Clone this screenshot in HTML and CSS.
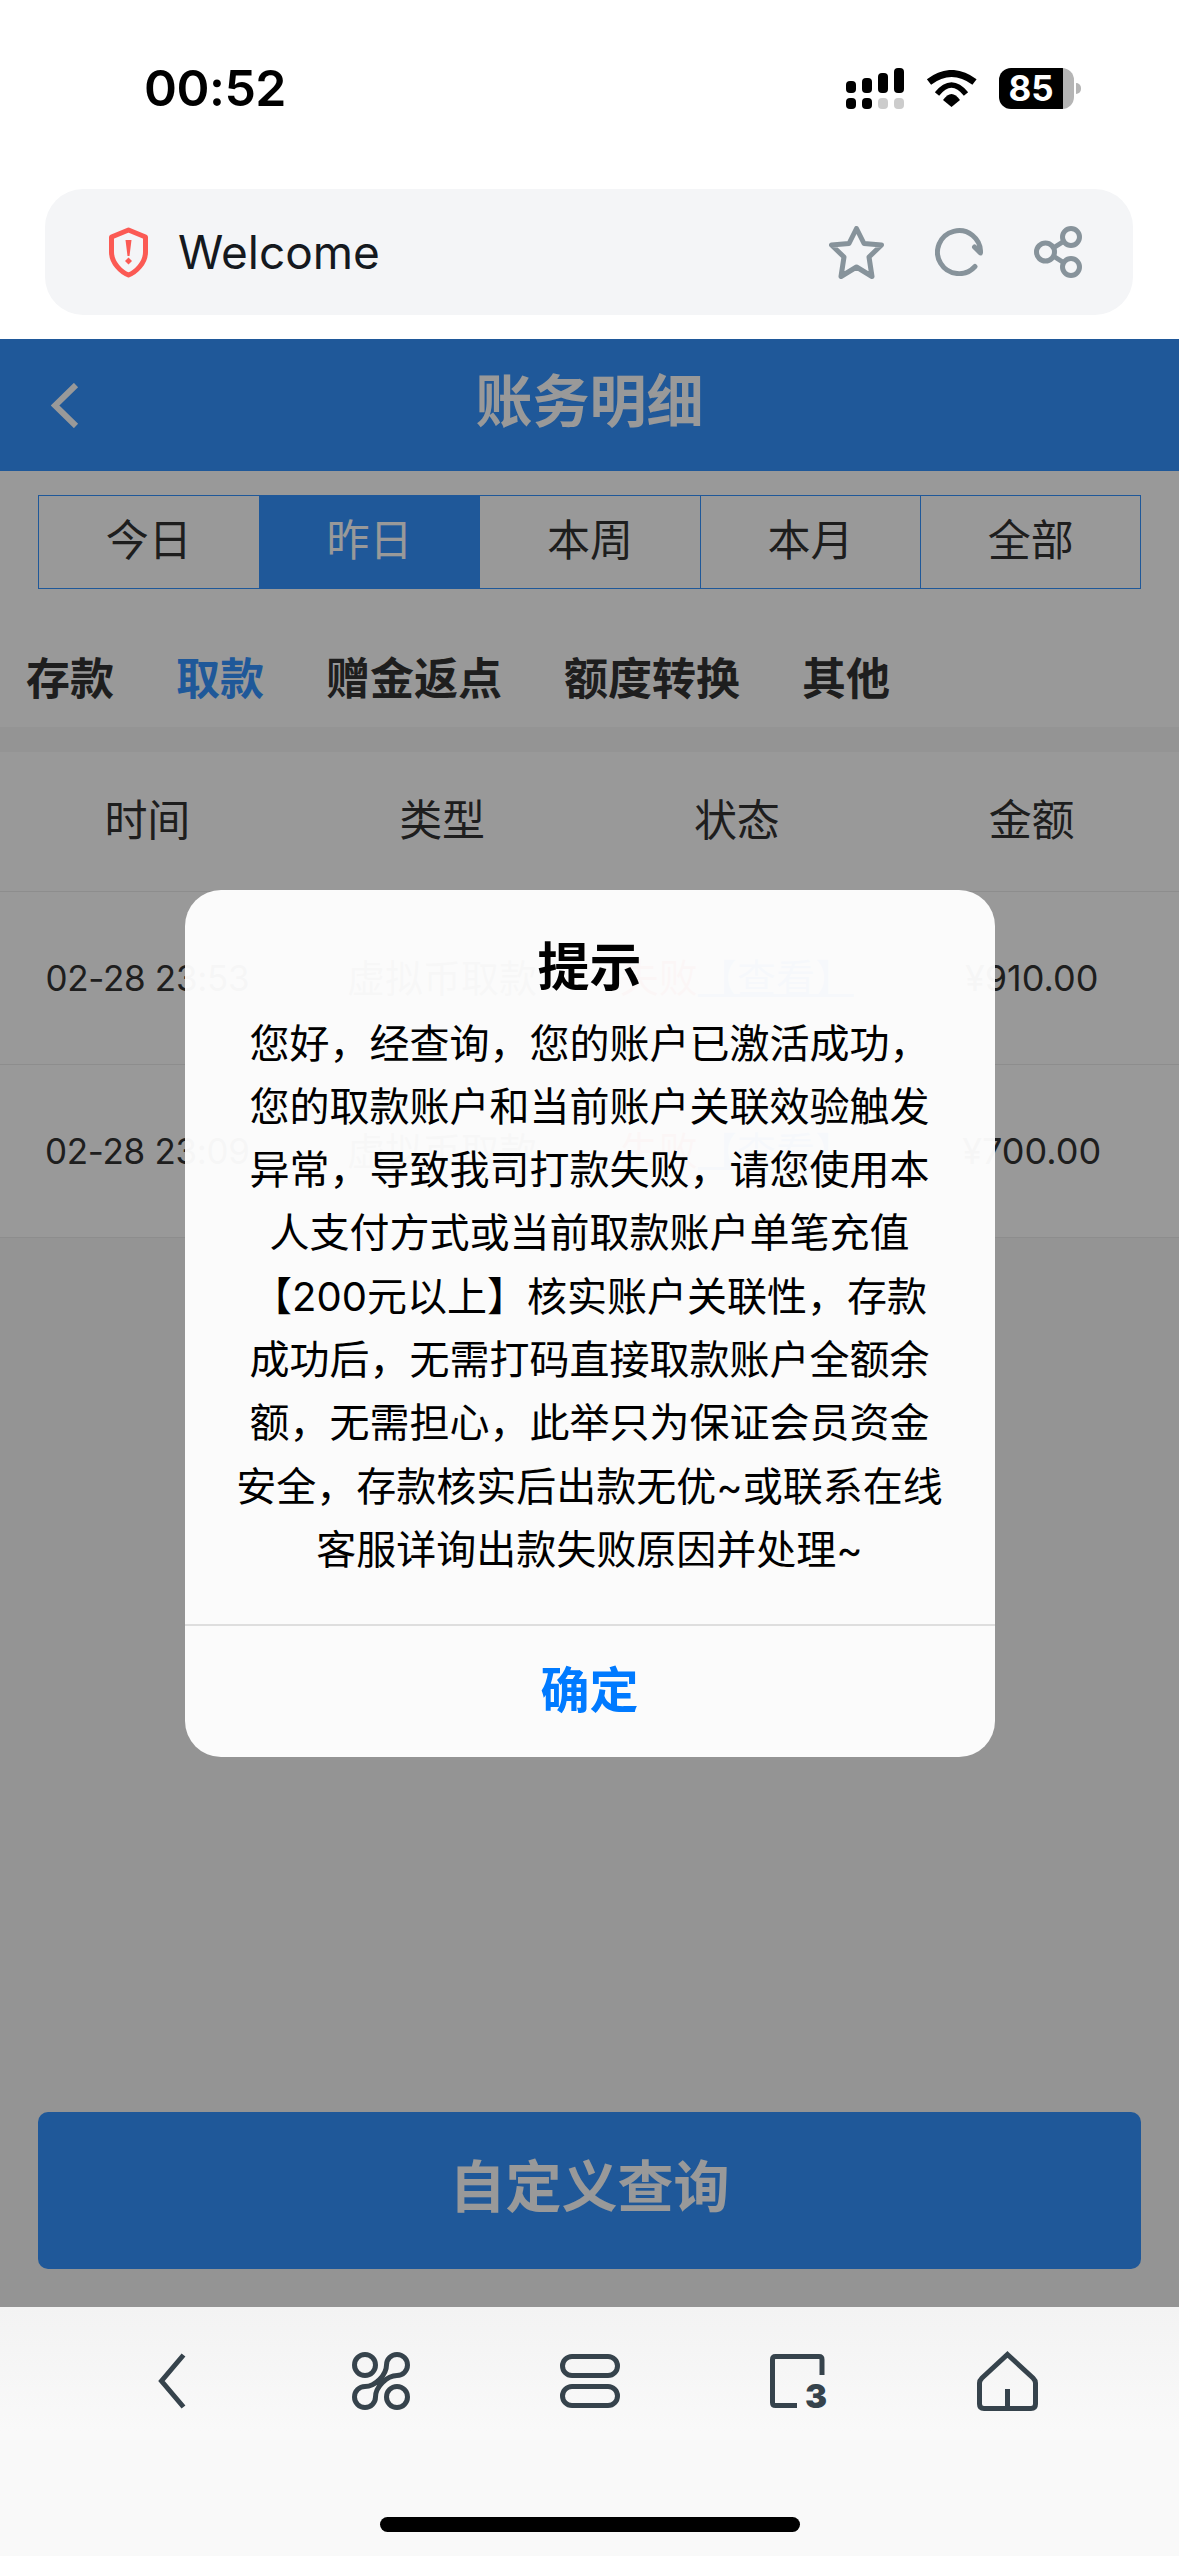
FILE: index.html
```html
<!DOCTYPE html>
<html lang="zh-CN">
<head>
    <meta charset="UTF-8">
    <meta name="viewport" content="width=device-width, initial-scale=1.0">
    <title>账务明细</title>
    <link rel="stylesheet" href="styles.css">
</head>
<body>
<div class="page">
    <div class="status-bar">
        <span class="time">00:52</span>
        <div class="status-icons">
            <svg class="signal" width="58" height="41" viewBox="0 0 58 41">
                <rect x="0" y="13" width="10" height="12" rx="4"/>
                <rect x="16" y="10" width="10" height="15" rx="4"/>
                <rect x="32" y="5" width="10" height="20" rx="4"/>
                <rect x="48" y="0" width="10" height="25" rx="4"/>
                <rect x="0" y="30" width="10" height="11" rx="4"/>
                <rect x="16" y="30" width="10" height="11" rx="4"/>
                <rect class="off" x="32" y="30" width="10" height="11" rx="4"/>
                <rect class="off" x="48" y="30" width="10" height="11" rx="4"/>
            </svg>
            <svg width="51" height="37" viewBox="0 0 51 37">
                <path d="M3 12 Q25.5 -5 48.5 12" fill="none" stroke="#000" stroke-width="7"/>
                <path d="M11 24 Q25.5 6 40 24" fill="none" stroke="#000" stroke-width="5.5"/>
                <path d="M25.5 37 L17 30 Q25.5 18 34 30 Z"/>
            </svg>
            <div class="battery">
                <div class="battery-body">
                    <span class="battery-level">85</span>
                    <span class="battery-rest"></span>
                </div>
                <span class="battery-nub"></span>
            </div>
        </div>
    </div>

    <div class="url-bar">
        <svg width="39" height="51" viewBox="0 0 39 51">
            <path d="M19.5 3 L36.5 10 V25 C36.5 36 27 45 19.5 48 C12 45 2.5 36 2.5 25 V10 Z" fill="none" stroke="#fb5a54" stroke-width="5" stroke-linejoin="round"/>
            <path d="M16.5 13 H22.5 L20.5 29 H18.5 Z" fill="#fb5a54"/>
            <path d="M19.5 30.5 L23 34 L19.5 37.5 L16 34 Z" fill="#fb5a54"/>
        </svg>
        <span class="url-title">Welcome</span>
        <div class="url-actions">
            <svg width="55" height="53" viewBox="0 0 55 53" class="url-icon">
                <path d="M27.5 2.5 L35 17.5 L52.5 19 L40 31 L43 50.5 L27.5 41 L12 50.5 L15 31 L2.5 19 L20 17.5 Z"/>
            </svg>
            <svg width="48" height="48" viewBox="0 0 48 48" class="url-icon">
                <path d="M40 38.5 A21.5 21.5 0 1 1 45.5 25 L39.5 19"/>
            </svg>
            <svg width="49" height="52" viewBox="0 0 49 52" class="url-icon">
                <circle cx="37" cy="11" r="8.5"/>
                <circle cx="11.5" cy="26" r="9"/>
                <circle cx="37" cy="41" r="8.5"/>
                <path d="M20 21.5 L29.5 15.5 M20 30.5 L29.5 36.5"/>
            </svg>
        </div>
    </div>

    <div class="web-area">
        <div class="nav">
            <svg class="nav-back" width="28" height="45" viewBox="0 0 28 45">
                <path d="M25 2 L4 22.5 L25 43"/>
            </svg>
            <div class="nav-title">账务明细</div>
        </div>

        <div class="range-tabs">
            <div class="range-tab">今日</div>
            <div class="range-tab active">昨日</div>
            <div class="range-tab">本周</div>
            <div class="range-tab">本月</div>
            <div class="range-tab">全部</div>
        </div>

        <div class="type-tabs">
            <span>存款</span>
            <span class="active">取款</span>
            <span>赠金返点</span>
            <span>额度转换</span>
            <span>其他</span>
        </div>

        <div class="table">
            <div class="row head">
                <div>时间</div>
                <div>类型</div>
                <div>状态</div>
                <div>金额</div>
            </div>
            <div class="row">
                <div class="date">02-28 23:53</div>
                <div class="kind">虚拟币取款</div>
                <div><span class="fail">失败</span><span class="view">【查看】</span></div>
                <div>¥910.00</div>
            </div>
            <div class="row">
                <div class="date">02-28 23:09</div>
                <div class="kind">虚拟币取款</div>
                <div><span class="fail">失败</span><span class="view">【查看】</span></div>
                <div>¥700.00</div>
            </div>
        </div>

        <div class="query-btn">自定义查询</div>

        <div class="overlay">
            <div class="modal">
                <div class="modal-title">提示</div>
                <div class="modal-text">您好&#65292;经查询&#65292;您的账户已激活成功&#65292;您的取款账户和当前账户关联效验触发异常&#65292;导致我司打款失败&#65292;请您使用本人支付方式或当前取款账户单笔充值【200元以上】核实账户关联性&#65292;存款成功后&#65292;无需打码直接取款账户全额余额&#65292;无需担心&#65292;此举只为保证会员资金安全&#65292;存款核实后出款无优~或联系在线客服详询出款失败原因并处理~</div>
                <div class="modal-btn">确定</div>
            </div>
        </div>
    </div>

    <div class="bottom-bar">
        <div class="bottom-icons">
            <svg width="28" height="56" viewBox="0 0 28 56">
                <path d="M25.5 2 L3.5 28 L25.5 54"/>
            </svg>
            <svg width="58" height="58" viewBox="0 0 58 58">
                <circle cx="13" cy="13" r="10.5"/>
                <circle cx="45" cy="45" r="10.5"/>
                <path d="M34.5 13 A10.5 10.5 0 1 1 45 23.5 C35 23.5 23.5 35 23.5 45 A10.5 10.5 0 1 1 13 34.5 C23 34.5 34.5 23 34.5 13 Z"/>
            </svg>
            <svg width="60" height="54" viewBox="0 0 60 54">
                <rect x="2.5" y="2.5" width="55" height="19" rx="9.5"/>
                <rect x="2.5" y="32.5" width="55" height="19" rx="9.5"/>
            </svg>
            <svg class="tabs-icon" width="57" height="54" viewBox="0 0 57 54">
                <path d="M27 51.5 H5.5 Q2.5 51.5 2.5 48.5 V5.5 Q2.5 2.5 5.5 2.5 H49 Q52 2.5 52 5.5 V21"/>
                <text x="46" y="54" text-anchor="middle" class="tab-count">3</text>
            </svg>
            <svg width="61" height="60" viewBox="0 0 61 60">
                <path d="M30.5 3.5 L56 27 Q58.5 29.5 58.5 32 V53 Q58.5 57.5 54 57.5 H7 Q2.5 57.5 2.5 53 V32 Q2.5 29.5 5 27 Z"/>
                <path d="M30.5 38 V57" stroke-width="6"/>
            </svg>
        </div>
        <div class="home-indicator"></div>
    </div>
</div>
</body>
</html>
```

FILE: styles.css
```css
* {
    box-sizing: border-box;
}

body {
    margin: 0;
    font-family: Inter, "Noto Sans CJK SC", sans-serif;
    background-color: white;
}

.page {
    height: 2556px;
    display: flex;
    flex-direction: column;
    overflow: hidden;
}

/* phone status bar */
.status-bar {
    height: 176px;
    margin-bottom: 13px;
    padding: 0 98px 0 144px;
    display: flex;
    justify-content: space-between;
    align-items: center;
}

.time {
    font-size: 50px;
    font-weight: 600;
    letter-spacing: -0.5px;
    color: black;
}

.status-icons {
    display: flex;
    align-items: center;
    gap: 22px;
}

.signal .off {
    fill: #cccccc;
}

.battery {
    display: flex;
    align-items: center;
    gap: 2px;
}

.battery-body {
    width: 75px;
    height: 41px;
    display: flex;
    border-radius: 12px;
    overflow: hidden;
}

.battery-level {
    width: 64px;
    background-color: black;
    color: white;
    font-size: 35px;
    font-weight: 700;
    line-height: 41px;
    text-align: center;
}

.battery-rest {
    flex: 1;
    background-color: #b5b5b5;
}

.battery-nub {
    width: 5px;
    height: 11px;
    background-color: #b5b5b5;
    border-radius: 0 6px 6px 0;
}

/* browser address bar */
.url-bar {
    height: 126px;
    margin: 0 46px 24px 45px;
    padding: 0 50px 0 64px;
    display: flex;
    align-items: center;
    background-color: #f4f5f7;
    border-radius: 38px;
}

.url-title {
    margin-left: 30px;
    font-size: 46px;
    color: #15191e;
}

.url-actions {
    margin-left: auto;
    display: flex;
    align-items: center;
    gap: 51px;
}

.url-icon * {
    fill: none;
    stroke: #87939b;
    stroke-width: 5;
    stroke-linecap: round;
    stroke-linejoin: round;
}

/* page in the webview */
.web-area {
    flex: 1;
    position: relative;
    display: flex;
    flex-direction: column;
    background-color: #f7f7f7;
}

.nav {
    height: 132px;
    display: grid;
    grid-template-columns: 1fr auto 1fr;
    align-items: center;
    padding: 0 51px;
    background-color: #3493ff;
    color: white;
}

.nav-back path {
    fill: none;
    stroke: white;
    stroke-width: 6;
}

.nav-title {
    font-size: 57px;
    font-weight: 700;
    line-height: 58px;
    margin-top: -6px;
}

.range-tabs {
    padding: 24px 38px 0;
    display: grid;
    grid-template-columns: repeat(5, 1fr);
    background-color: white;
}

.range-tab {
    height: 94px;
    line-height: 88px;
    text-align: center;
    font-size: 43px;
    color: #333;
    border: 1px solid #3493ff;
    border-right: none;
}

.range-tab:last-child {
    border-right: 1px solid #3493ff;
}

.range-tab.active {
    background-color: #3493ff;
    color: white;
}

.type-tabs {
    height: 138px;
    padding: 64px 0 0 26px;
    display: flex;
    gap: 62px;
    font-size: 44px;
    font-weight: 700;
    line-height: 52px;
    color: #333;
    background-color: white;
}

.type-tabs .active {
    color: #3493ff;
}

.table {
    margin-top: 25px;
    background-color: white;
}

.row {
    height: 173px;
    display: grid;
    grid-template-columns: repeat(4, 1fr);
    align-items: center;
    text-align: center;
    font-size: 36px;
    line-height: 46px;
    color: #333;
    border-bottom: 1px solid #ececec;
}

.row.head {
    height: 140px;
    padding-bottom: 3px;
    font-size: 43px;
}

.row .date {
    font-size: 35px;
    letter-spacing: -0.3px;
}

.row .kind {
    font-size: 38px;
    color: #666;
}

.fail {
    font-size: 39px;
    color: #f44;
}

.view {
    font-size: 39px;
    color: #3493ff;
    text-decoration: underline;
}

.query-btn {
    margin: auto 38px 38px;
    height: 157px;
    line-height: 150px;
    text-align: center;
    font-size: 56px;
    font-weight: 700;
    color: white;
    background-color: #3493ff;
    border-radius: 10px;
}

/* alert over the dimmed page */
.overlay {
    position: absolute;
    inset: 0;
    display: flex;
    justify-content: center;
    align-items: center;
    background-color: rgba(0, 0, 0, 0.4);
}

.modal {
    width: 810px;
    height: 867px;
    padding-top: 43px;
    display: flex;
    flex-direction: column;
    background-color: rgba(255, 255, 255, 0.96);
    border-radius: 36px;
    text-align: center;
    color: black;
}

.modal-title {
    font-size: 52px;
    font-weight: 700;
    line-height: 70px;
}

.modal-text {
    margin-top: 9px;
    padding: 0 48px;
    height: 570px;
    font-size: 40px;
    line-height: 63.3px;
}

.modal-btn {
    margin-top: auto;
    height: 133px;
    line-height: 130px;
    font-size: 49px;
    font-weight: 700;
    color: #007aff;
    border-top: 2px solid #dedede;
}

/* browser toolbar */
.bottom-bar {
    height: 249px;
    padding-top: 44px;
    display: flex;
    flex-direction: column;
    background: linear-gradient(#f3f3f3, #f9f9f9 50%);
}

.bottom-icons {
    padding: 0 67px;
    display: grid;
    grid-template-columns: repeat(5, 1fr);
    justify-items: center;
    align-items: center;
}

.bottom-icons svg * {
    fill: none;
    stroke: #36434c;
    stroke-width: 5;
}

.tabs-icon {
    overflow: visible;
}

.bottom-icons .tab-count {
    fill: #36434c;
    stroke: none;
    font-size: 33px;
    font-weight: 900;
}

.home-indicator {
    width: 420px;
    height: 15px;
    margin: auto auto 24px;
    background-color: black;
    border-radius: 8px;
}
```
